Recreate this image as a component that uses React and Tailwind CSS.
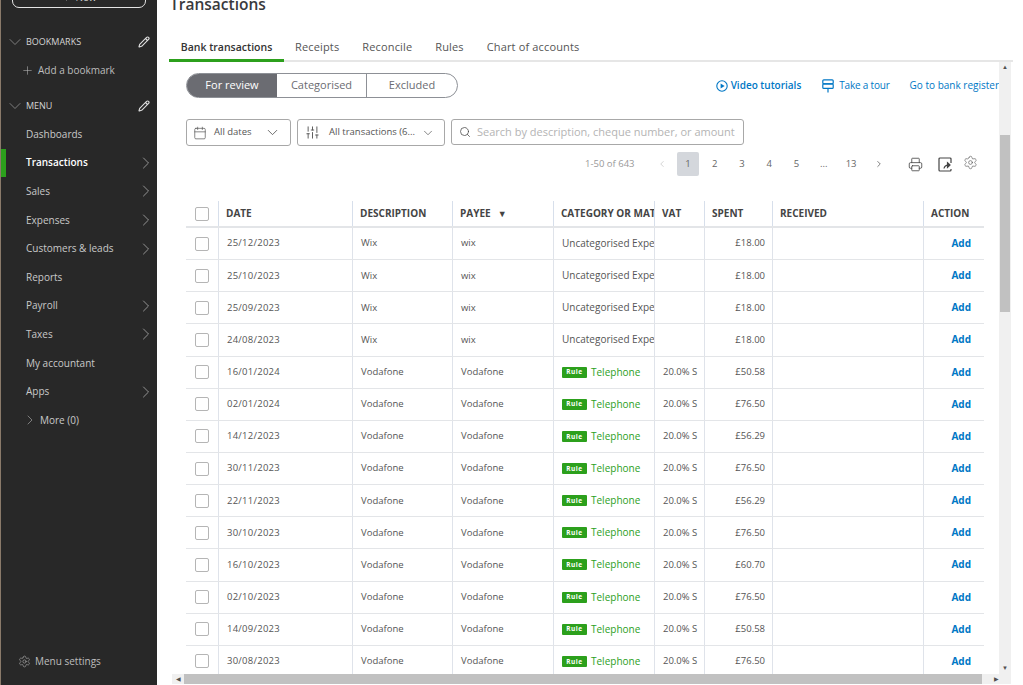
import React from "react";
import { Calendar, ChevronDown, ChevronRight, ChevronLeft, Pencil, Plus, Settings, Search, SlidersVertical, Printer } from "lucide-react";

const navItems = [
  { label: "Dashboards" },
  { label: "Transactions", active: true, arrow: true },
  { label: "Sales", arrow: true },
  { label: "Expenses", arrow: true },
  { label: "Customers & leads", arrow: true },
  { label: "Reports" },
  { label: "Payroll", arrow: true },
  { label: "Taxes", arrow: true },
  { label: "My accountant" },
  { label: "Apps", arrow: true },
];

const wix = ["25/12/2023", "25/10/2023", "25/09/2023", "24/08/2023"];
const vodafone = [
  ["16/01/2024", "£50.58"],
  ["02/01/2024", "£76.50"],
  ["14/12/2023", "£56.29"],
  ["30/11/2023", "£76.50"],
  ["22/11/2023", "£56.29"],
  ["30/10/2023", "£76.50"],
  ["16/10/2023", "£60.70"],
  ["02/10/2023", "£76.50"],
  ["14/09/2023", "£50.58"],
  ["30/08/2023", "£76.50"],
];

const pages = ["2", "3", "4", "5", "...", "13"];

function PlayIcon() {
  return (
    <svg width="12" height="12" viewBox="0 0 12 12" className="mr-[3px]">
      <circle cx="6" cy="6" r="5.2" fill="none" stroke="currentColor" strokeWidth="1.1" />
      <path d="M4.6 3.4 8.6 6 4.6 8.6Z" fill="currentColor" />
    </svg>
  );
}

function TourIcon() {
  return (
    <svg width="12" height="14" viewBox="0 0 12 14" fill="none" stroke="currentColor" strokeWidth="1.2" className="mr-[5px]">
      <rect x="0.8" y="0.8" width="10.4" height="4" rx="1" />
      <rect x="0.8" y="4.8" width="10.4" height="4.6" rx="1" />
      <path d="M6 9.4V13.4" />
    </svg>
  );
}

function ExportIcon() {
  return (
    <svg width="14" height="15" viewBox="0 0 14 15" fill="none" stroke="#444" strokeWidth="1.2" className="ml-[15px]">
      <path d="M13 6V2a1 1 0 0 0-1-1H2a1 1 0 0 0-1 1v11a1 1 0 0 0 1 1h10a1 1 0 0 0 1-1v-1" />
      <path d="M6 11.5c.4-2.4 2-3.4 4.5-3.4" />
      <path d="M9.5 5.8 12 8.1 9.5 10.4Z" fill="#444" />
    </svg>
  );
}

function SectionHead({ label, className }) {
  return (
    <div className={`h-[20px] flex items-center pl-[4px] pr-[7px] text-[#d4d4d4] text-[9px] ${className}`}>
      <ChevronDown size={20} strokeWidth={0.8} className="text-[#a8a8a8] mr-[1px]" />
      <span className="flex-1">{label}</span>
      <Pencil size={12} strokeWidth={2.2} className="text-[#e0e0e0]" />
    </div>
  );
}

function Sidebar() {
  return (
    <aside className="w-[157px] shrink-0 bg-[#282828] border-l border-[#8a7a6a] flex flex-col text-[10px] text-[#c9c9c9]">
      <div className="mx-[11px] mt-[-13px] h-[21px] border border-[#e4e4e4] rounded-[7px] flex items-center justify-center gap-[5px] text-[10px]">
        <Plus size={9} /> New
      </div>
      <SectionHead label="BOOKMARKS" className="mt-[24px]" />
      <div className="mt-[8px] h-[20px] flex items-center pl-[20px] text-[#bdbdbd]">
        <Plus size={13} strokeWidth={1} className="mr-[4px]" />
        Add a bookmark
      </div>
      <SectionHead label="MENU" className="mt-[16px]" />
      <nav className="mt-[4px] flex flex-col">
        {navItems.map((item) => (
          <div
            key={item.label}
            className={`h-[28.6px] flex items-center pl-[20px] pr-[1px] border-l-[5px] ${
              item.active ? "border-[#2ca01c] text-white font-semibold" : "border-transparent"
            }`}
          >
            <span className="flex-1">{item.label}</span>
            {item.arrow && <ChevronRight size={20} strokeWidth={1} className="text-[#a8a8a8]" />}
          </div>
        ))}
        <div className="h-[28.6px] flex items-center pl-[21px]">
          <ChevronRight size={16} strokeWidth={1} className="text-[#a8a8a8] mr-[2px]" />
          More (0)
        </div>
      </nav>
      <div className="mt-auto mb-[16px] pl-[17px] flex items-center gap-[4px] text-[#bdbdbd]">
        <Settings size={13} strokeWidth={1} />
        Menu settings
      </div>
    </aside>
  );
}

function Tabs() {
  const tabs = ["Receipts", "Reconcile", "Rules", "Chart of accounts"];
  return (
    <div className="ml-[11px] h-[30px] flex items-start border-b-2 border-[#e6e6e6] text-[11px] tracking-[0.15px] text-[#555]">
      <div className="h-[30px] w-[115px] border-b-[3px] border-[#2ca01c] pt-[8px] text-center text-[10.5px] tracking-normal font-semibold text-[#333]">Bank transactions</div>
      {tabs.map((t, i) => (
        <div key={t} className={`pt-[7px] ${i === 0 ? "ml-[11px]" : "ml-[23px]"}`}>{t}</div>
      ))}
    </div>
  );
}

function Toolbar() {
  return (
    <>
      <div className="h-[25px] flex items-center justify-between pl-[28px] mt-[11px]">
        <div className="flex h-[25px] w-[272px] border border-[#8d9096] rounded-full overflow-hidden text-[11px] text-[#6b6c72]">
          <div className="w-[90px] bg-[#6b6c72] text-white flex items-center justify-center">For review</div>
          <div className="w-[90px] border-r border-[#8d9096] flex items-center justify-center">Categorised</div>
          <div className="flex-1 flex items-center justify-center">Excluded</div>
        </div>
        <div className="flex items-center text-[#0077c5] text-[10px] whitespace-nowrap">
          <PlayIcon />
          <span className="font-semibold">Video tutorials</span>
          <span className="w-[21px]" />
          <TourIcon />
          <span className="tracking-[-0.2px]">Take a tour</span>
          <span className="ml-[20px]">Go to bank register</span>
        </div>
      </div>
      <div className="mt-[21px] pl-[28px] flex gap-[6px] text-[9.5px] text-[#555]">
        <div className="h-[27px] w-[105px] border border-[#a8a8a8] rounded-[3px] flex items-center px-[6px]">
          <Calendar size={14} strokeWidth={1.2} className="mr-[7px]" />
          <span className="flex-1">All dates</span>
          <ChevronDown size={17} strokeWidth={1.2} className="mr-[3px]" />
        </div>
        <div className="h-[27px] w-[148px] border border-[#a8a8a8] rounded-[3px] flex items-center px-[7px]">
          <SlidersVertical size={15} strokeWidth={1.5} className="mr-[9px]" />
          <span className="flex-1 whitespace-nowrap">All transactions (6...</span>
          <ChevronDown size={14} strokeWidth={1.2} className="mr-[2px]" />
        </div>
        <div className="h-[26px] w-[293px] border border-[#a8a8a8] rounded-[3px] flex items-center px-[7px] text-[11px] text-[#b4b4b4]">
          <Search size={12} strokeWidth={1.5} className="text-[#444] mr-[6px]" />
          <span className="whitespace-nowrap">Search by description, cheque number, or amount</span>
        </div>
      </div>
      <div className="mt-[6px] h-[24px] flex items-center text-[9.5px] text-[#666]">
        <span className="ml-[427px] text-[#999] w-[70px]">1-50 of 643</span>
        <ChevronLeft size={10} className="text-[#ccc] ml-[2px]" />
        <span className="ml-[10px] mr-[2px] w-[22px] h-[24px] bg-[#d4d7dc] rounded-[2px] flex items-center justify-center">1</span>
        {pages.map((p) => (
          <span key={p} className="w-[27.3px] text-center">{p}</span>
        ))}
        <ChevronRight size={10} className="ml-[9px]" />
        <Printer size={15} strokeWidth={1.3} className="ml-[24px] text-[#444]" />
        <ExportIcon />
        <Settings size={15} strokeWidth={1} className="ml-[11px] mb-[3px] text-[#555]" />
      </div>
    </>
  );
}

function Checkbox() {
  return <div className="w-[14px] h-[14px] border border-[#b5b5b5] rounded-[2px] bg-white" />;
}

const cell = "border-l border-[#dfe3ea] h-full flex items-center overflow-hidden whitespace-nowrap";

function Row({ date, desc, payee, rule, vat, spent }) {
  return (
    <div className="h-[32.15px] flex items-center border-b border-[#e3e5e8] text-[9.5px] text-[#555]">
      <div className="w-[32px] pl-[9px]"><Checkbox /></div>
      <div className={`${cell} w-[134px] pl-[8px] tracking-[0.25px]`}>{date}</div>
      <div className={`${cell} w-[100px] pl-[8px]`}>{desc}</div>
      <div className={`${cell} w-[101px] pl-[8px]`}>{payee}</div>
      <div className={`${cell} w-[101px] pl-[8px]`}>
        {rule ? (
          <>
            <span className="bg-[#2ca01c] text-white text-[6.5px] font-bold tracking-[0.5px] w-[25px] h-[11px] rounded-[1px] flex items-center justify-center mr-[4px]">Rule</span>
            <span className="text-[#2ca01c] text-[10px]">Telephone</span>
          </>
        ) : (
          <span className="text-[10px]">Uncategorised Expense</span>
        )}
      </div>
      <div className={`${cell} w-[50px] pl-[8px]`}>{vat}</div>
      <div className={`${cell} w-[68px] justify-end pr-[7px]`}>{spent}</div>
      <div className={`${cell} w-[151px]`} />
      <div className={`${cell} w-[61px] justify-end pr-[13px] text-[#0077c5] font-bold text-[10px]`}>Add</div>
    </div>
  );
}

function Table() {
  const head = "border-l border-[#d7dfeb] h-full flex items-center pl-[7px] overflow-hidden whitespace-nowrap";
  return (
    <div className="mt-[25px] ml-[28px] w-[798px]">
      <div className="h-[27px] flex items-center border-b-2 border-[#e3e5e8] text-[10px] font-bold text-[#444]">
        <div className="w-[32px] pl-[9px]"><Checkbox /></div>
        <div className={`${head} w-[134px]`}>DATE</div>
        <div className={`${head} w-[100px]`}>DESCRIPTION</div>
        <div className={`${head} w-[101px]`}>PAYEE <span className="ml-[7px] text-[9px]">▼</span></div>
        <div className={`${head} w-[101px]`}>CATEGORY OR MATCH</div>
        <div className={`${head} w-[50px]`}>VAT</div>
        <div className={`${head} w-[68px]`}>SPENT</div>
        <div className={`${head} w-[151px]`}>RECEIVED</div>
        <div className={`${head} w-[61px]`}>ACTION</div>
      </div>
      {wix.map((d) => (
        <Row key={d} date={d} desc="Wix" payee="wix" spent="£18.00" />
      ))}
      {vodafone.map(([d, s]) => (
        <Row key={d} date={d} desc="Vodafone" payee="Vodafone" rule vat="20.0% S" spent={s} />
      ))}
    </div>
  );
}

function VScroll() {
  return (
    <div className="w-[12px] shrink-0 bg-[#f0f0f0] flex flex-col items-center">
      <div className="h-[11px] text-[6px] leading-[11px] text-[#505050]">▲</div>
      <div className="w-[10px] h-[177px] mt-[62px] bg-[#c1c1c1]" />
      <div className="mt-auto h-[11px] text-[6px] leading-[11px] text-[#505050]">▼</div>
    </div>
  );
}

function HScroll() {
  return (
    <div className="h-[10px] ml-[14px] mr-[12px] mb-[1px] bg-[#f0f0f0] flex items-center">
      <div className="w-[12px] text-[6px] text-[#505050] text-center">◀</div>
      <div className="h-[10px] w-[798px] bg-[#c1c1c1]" />
      <div className="flex-1 text-[6px] text-[#505050] text-center">▶</div>
    </div>
  );
}

export default function App() {
  return (
    <div className="w-[1023px] h-[685px] flex overflow-hidden bg-white" style={{ fontFamily: '"Open Sans", sans-serif' }}>
      <Sidebar />
      <main className="flex-1 min-w-0 ml-[1px] flex flex-col">
        <h1 className="ml-[12px] mt-[-7px] h-[29px] text-[15.5px] font-semibold text-[#393a3d]">Transactions</h1>
        <div className="mt-[10px] mr-[10px]"><Tabs /></div>
        <div className="flex-1 min-h-0 flex pr-[12px]">
          <div className="flex-1 min-w-0 overflow-hidden">
            <Toolbar />
            <Table />
          </div>
          <VScroll />
        </div>
        <HScroll />
      </main>
    </div>
  );
}
